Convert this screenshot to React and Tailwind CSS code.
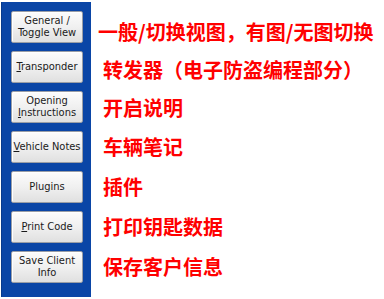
import React from "react";

const buttons = [
  { lines: ["General /", "Toggle View"] },
  { lines: [[<u key="u">T</u>, "ransponder"]] },
  { lines: ["Opening", [<u key="u">I</u>, "nstructions"]] },
  { lines: [[<u key="u">V</u>, "ehicle Notes"]] },
  { lines: ["Plugins"] },
  { lines: [[<u key="u">P</u>, "rint Code"]] },
  { lines: ["Save Client", "Info"] },
];

const labels = [
  { t: "一般/切换视图，有图/无图切换", cls: "h-[40px] -ml-[5px]" },
  { t: "转发器（电子防盗编程部分）", cls: "h-[36px]" },
  { t: "开启说明", cls: "h-[39px]" },
  { t: "车辆笔记", cls: "h-[40px]" },
  { t: "插件", cls: "h-[40px]" },
  { t: "打印钥匙数据", cls: "h-[40px]" },
  { t: "保存客户信息", cls: "h-[40px]" },
];

export default function App() {
  return (
    <div className="w-[384px] h-[299px] bg-white flex overflow-hidden">
      <div className="ml-[1px] mt-[2px] w-[90px] h-[295px] bg-[#0a45a6] border-l border-[#083a8c] flex flex-col pt-[9px] pl-[9px] gap-[8px] shrink-0">
        {buttons.map((b, i) => (
          <div
            key={i}
            className="w-[72px] h-[32px] rounded-[2px] border border-[#9a9ea6] bg-gradient-to-b from-[#fcfcfc] via-[#f0f0f0] to-[#e0e0e0] flex flex-col items-center justify-center text-[11px] leading-[12px] text-[#1a1a1a] shadow-[inset_1px_1px_0_#ffffff]"
            style={{ fontFamily: '"DejaVu Sans Condensed", "Liberation Sans", sans-serif' }}
          >
            {b.lines.map((l, j) => (
              <div key={j} className="whitespace-nowrap">{l}</div>
            ))}
          </div>
        ))}
      </div>
      <div
        className="flex flex-col pt-[12px] pl-[12px] text-[#ff0000] font-bold text-[20px]"
        style={{ fontFamily: '"Noto Sans CJK SC", "Noto Sans", sans-serif' }}
      >
        {labels.map((l, i) => (
          <div key={i} className={`flex items-center whitespace-nowrap leading-none ${l.cls}`}>
            {l.t}
          </div>
        ))}
      </div>
    </div>
  );
}
